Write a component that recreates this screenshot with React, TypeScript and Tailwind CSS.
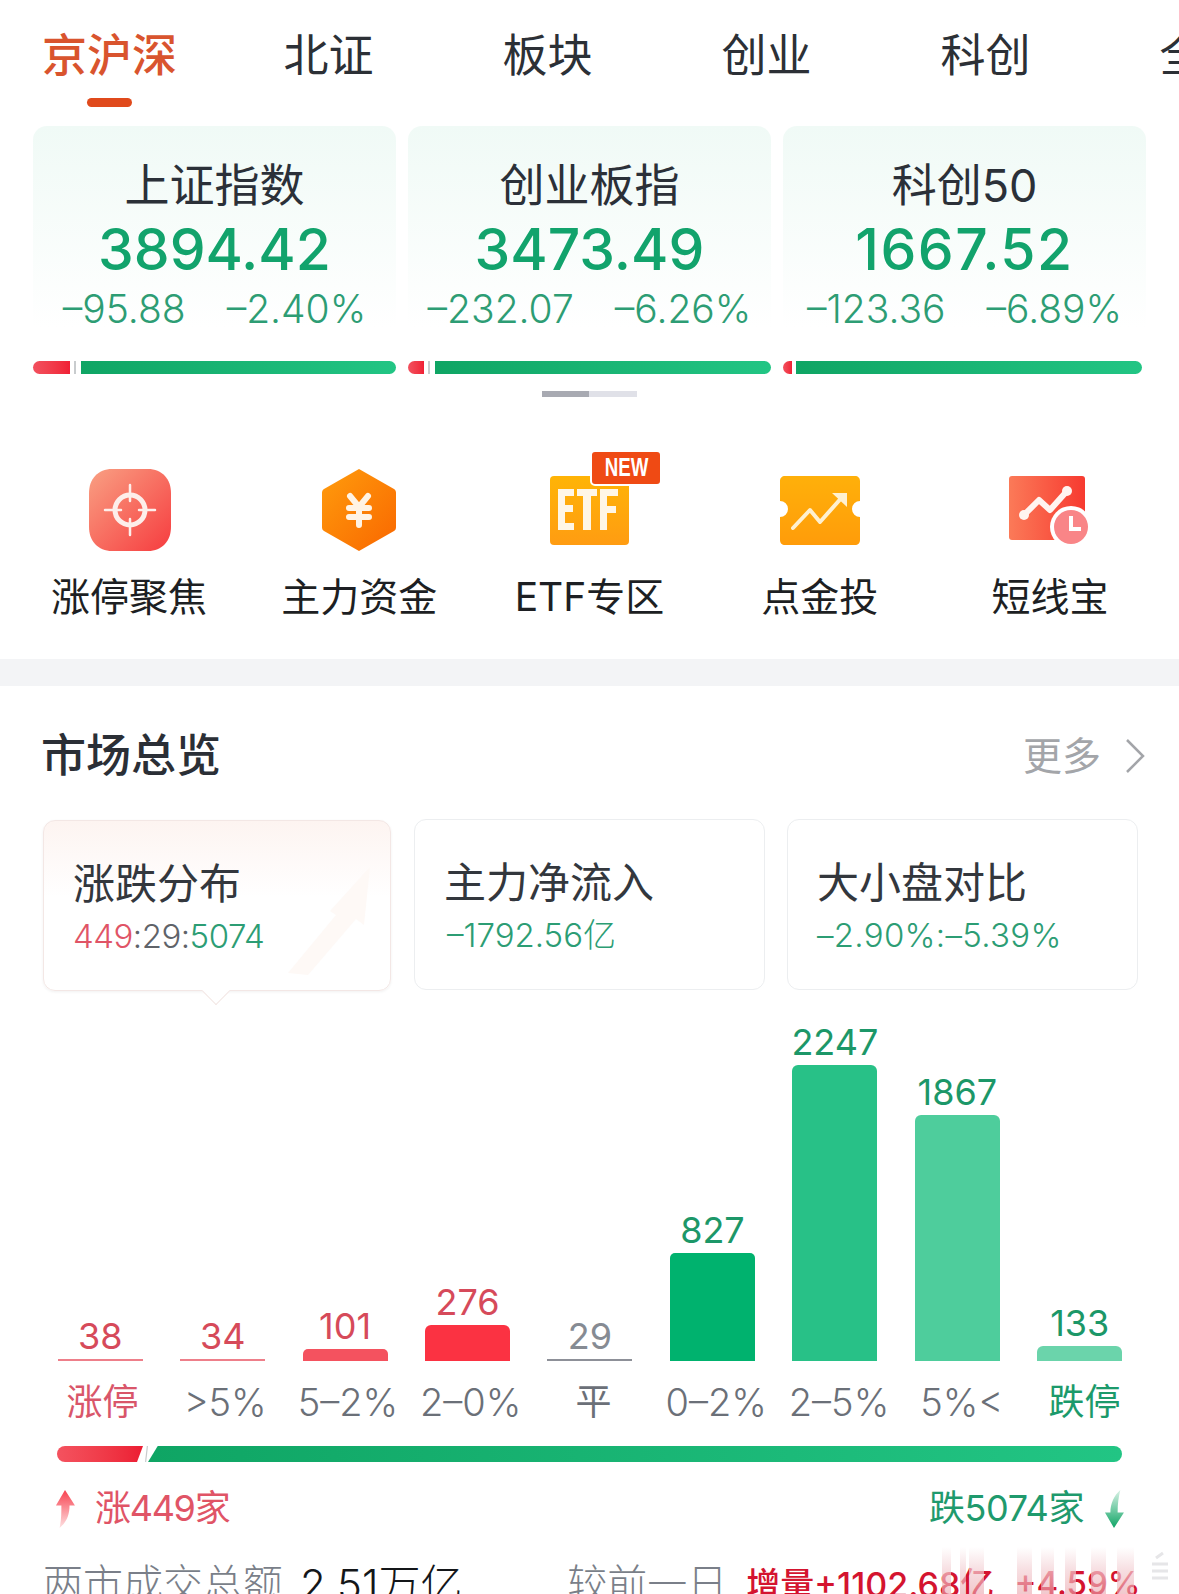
import React from "react";

const Tab = ({ t, active, w }: { t: string; active?: boolean; w: string }) => (
  <div className={`${w} flex flex-col items-center shrink-0`}>
    <div className={`text-[45px] leading-[56px] whitespace-nowrap ${active ? "text-[#d9542e] font-medium" : "text-[#2c3036]"}`}>{t}</div>
    <div className={`mt-[14px] w-[45px] h-[9px] rounded-full ${active ? "bg-[#e04a1c]" : "bg-transparent"}`} />
  </div>
);

const Index = ({ name, val, a, b, red, tick, green, vt }: { name: string; val: string; a: string; b: string; red: string; tick: string; green: string; vt?: string }) => (
  <div className="w-[363px] shrink-0">
    <div className="h-[224px] rounded-t-[14px] bg-gradient-to-b from-[#f0faf6] to-white to-[90%] flex flex-col items-center pt-[32px]">
      <div className="text-[45px] leading-[56px] text-[#2b3038]">{name}</div>
      <div className={`text-[57px] leading-[68px] font-medium text-[#12a36c] mt-[2px] ${vt ?? ""}`}>{val}</div>
      <div className="text-[39px] leading-[50px] text-[#2d9d74] flex gap-[41px] font-light">
        <span>{a}</span>
        <span>{b}</span>
      </div>
    </div>
    <div className="h-[13px] mt-[11px] flex items-stretch">
      <div className={`${red} rounded-l-full bg-gradient-to-r from-[#f2505e] to-[#f01f35]`} />
      <div className={tick} />
      <div className={`flex-1 rounded-r-full bg-gradient-to-r from-[#0fa564] to-[#22c584] ${green}`} />
    </div>
  </div>
);

const IconTarget = () => (
  <svg width="84" height="84" viewBox="0 0 84 84" className="translate-x-[1px]">
    <defs>
      <linearGradient id="g1" x1="0" y1="0" x2="1" y2="1">
        <stop offset="0" stopColor="#f9a083" />
        <stop offset="1" stopColor="#f63c3f" />
      </linearGradient>
    </defs>
    <path d="M24 1H60C74 1 83 11 83 25V59C83 73 74 83 60 83H24C10 83 1 73 1 59V25C1 11 10 1 24 1Z" fill="url(#g1)" />
    <circle cx="42" cy="42" r="15" fill="none" stroke="#fdeeea" strokeWidth="5" />
    <path d="M42 17V33M42 51V67M17 42H33M51 42H67" stroke="#fdeeea" strokeWidth="2.500" strokeLinecap="round" />
  </svg>
);

const IconHex = () => (
  <svg width="84" height="84" viewBox="0 0 84 84">
    <defs>
      <linearGradient id="g2" x1="0" y1="0" x2="1" y2="1">
        <stop offset="0" stopColor="#ff9c0c" />
        <stop offset="1" stopColor="#f96700" />
      </linearGradient>
    </defs>
    <path d="M42 1L77 21C78.500 22 79 23 79 25V59C79 61 78.500 62 77 63L42 83L7 63C5.500 62 5 61 5 59V25C5 23 5.500 22 7 21Z" fill="url(#g2)" />
    <path d="M33 28L42 39L51 28M32 40H52M32 49H52M42 40V57" fill="none" stroke="#fff3e4" strokeWidth="6" strokeLinecap="round" />
  </svg>
);

const IconEtf = () => (
  <div className="relative w-[84px] h-[84px]">
    <svg width="84" height="84" viewBox="0 0 84 84" className="absolute left-0 top-0">
      <defs>
        <linearGradient id="g3" x1="0" y1="0" x2="0" y2="1">
          <stop offset="0" stopColor="#ffb406" />
          <stop offset="1" stopColor="#ff9c12" />
        </linearGradient>
      </defs>
      <rect x="3" y="8" width="79" height="69" rx="4" fill="url(#g3)" />
      <path d="M11 21H27V28H18V37H26V44H18V55H27V62H11ZM30 21H50V28H44V62H36V28H30ZM53 21H71V28H60V38H69V45H60V62H53Z" fill="#fff6e6" />
    </svg>
    <div className="absolute left-[43px] -top-[18px] w-[68px] h-[32px] rounded-[5px] bg-[#ef4a14] border-2 border-white box-content text-white text-[22px] leading-[32px] font-bold text-center [font-family:'Liberation_Sans',sans-serif]">
      <span className="inline-block scale-x-[0.85] scale-y-[1.15]">NEW</span>
    </div>
  </div>
);

const IconTicket = () => (
  <svg width="84" height="84" viewBox="0 0 84 84">
    <defs>
      <linearGradient id="g4" x1="0" y1="0" x2="0" y2="1">
        <stop offset="0" stopColor="#ffb00a" />
        <stop offset="1" stopColor="#ff9c0a" />
      </linearGradient>
    </defs>
    <path d="M7 8H77C80 8 82 10 82 13V33A8 8 0 0 0 82 49V72C82 75 80 77 77 77H7C4 77 2 75 2 72V49A8 8 0 0 0 2 33V13C2 10 4 8 7 8Z" fill="url(#g4)" />
    <path d="M15 60L32 42L42 54L66 27" fill="none" stroke="#fff0cf" strokeWidth="4" strokeLinecap="round" strokeLinejoin="round" />
    <path d="M54 25H69V39Z" fill="#fff0cf" />
  </svg>
);

const IconShort = () => (
  <div className="relative w-[84px] h-[84px]">
    <svg width="100" height="84" viewBox="0 0 100 84" className="absolute -left-[2px] top-0">
      <defs>
        <linearGradient id="g5" x1="0" y1="0" x2="1" y2="0">
          <stop offset="0" stopColor="#fb7a58" />
          <stop offset="1" stopColor="#f73a30" />
        </linearGradient>
      </defs>
      <rect x="3" y="8" width="76" height="64" rx="3" fill="url(#g5)" />
      <path d="M18 47L33 32L44 42L61 23" fill="none" stroke="#fff4f0" strokeWidth="6" strokeLinecap="round" strokeLinejoin="round" />
      <circle cx="18" cy="47" r="5" fill="#fff4f0" />
      <circle cx="61" cy="23" r="5" fill="#fff4f0" />
      <circle cx="65" cy="59" r="21" fill="#ffffff" />
      <circle cx="65" cy="59" r="17" fill="#f98587" />
      <path d="M65 48V61H75" fill="none" stroke="#fff" strokeWidth="4" />
    </svg>
  </div>
);

const shortcuts: { icon: React.ReactNode; label: string }[] = [
  { icon: <IconTarget />, label: "涨停聚焦" },
  { icon: <IconHex />, label: "主力资金" },
  { icon: <IconEtf />, label: "ETF专区" },
  { icon: <IconTicket />, label: "点金投" },
  { icon: <IconShort />, label: "短线宝" },
];

const chart = [
  { n: "38", h: "h-[2px]", bar: "bg-[#ee7f8a]", nc: "text-[#d64a5a]", l: "涨停", lc: "text-[#d9566a] text-[36px] font-normal" },
  { n: "34", h: "h-[2px]", bar: "bg-[#ee7f8a]", nc: "text-[#d64a5a]", l: ">5%", lc: "text-[#6b7078] text-[38px] font-light" },
  { n: "101", h: "h-[12px] rounded-t-[5px]", bar: "bg-[#f4525f]", nc: "text-[#d64a5a]", l: "5–2%", lc: "text-[#6b7078] text-[38px] font-light" },
  { n: "276", h: "h-[36px] rounded-t-[6px]", bar: "bg-[#fb3242]", nc: "text-[#d64a5a]", l: "2–0%", lc: "text-[#6b7078] text-[38px] font-light" },
  { n: "29", h: "h-[2px]", bar: "bg-[#8d9098]", nc: "text-[#868b93]", l: "平", lc: "text-[#6b7078] text-[36px] font-normal" },
  { n: "827", h: "h-[108px] rounded-t-[5px]", bar: "bg-[#00b26e]", nc: "text-[#1c9768]", l: "0–2%", lc: "text-[#6b7078] text-[38px] font-light" },
  { n: "2247", h: "h-[296px] rounded-t-[6px]", bar: "bg-[#28c187]", nc: "text-[#1c9768]", l: "2–5%", lc: "text-[#6b7078] text-[38px] font-light" },
  { n: "1867", h: "h-[246px] rounded-t-[6px]", bar: "bg-[#4ecd9c]", nc: "text-[#1c9768]", l: "5%<", lc: "text-[#6b7078] text-[38px] font-light" },
  { n: "133", h: "h-[15px] rounded-t-[6px]", bar: "bg-[#6bd4ab]", nc: "text-[#1c9768]", l: "跌停", lc: "text-[#1c9a6b] text-[36px] font-normal" },
];

const Stat = ({ title, children, active, w }: { title: string; children: React.ReactNode; active?: boolean; w: string }) => (
  <div className={`${w} shrink-0 h-[171px] rounded-[12px] border pl-[29px] pt-[36px] relative ${active ? "translate-y-[1px] border-[#f3e7e5] bg-gradient-to-b from-[#fdf4f1] to-white to-[45%] shadow-[0_1px_3px_rgba(0,0,0,0.06)]" : "border-[#eceef0] bg-white"}`}>
    <div className="text-[42px] leading-[54px] text-[#33373d]">{title}</div>
    <div className="text-[33px] leading-[44px] font-light mt-[3px]">{children}</div>
    {active && (
      <>
        <svg width="90" height="110" viewBox="0 0 90 110" className="absolute right-[14px] top-[44px]">
          <path d="M2 108L50 50L44 46L84 2L78 60L70 54L22 110Z" fill="#fef9f6" />
        </svg>
        <div className="absolute left-[162px] -bottom-[11px] w-[20px] h-[20px] rotate-45 bg-white border-r border-b border-[#f3e7e5]" />
      </>
    )}
  </div>
);

const strips = [
  "left-[942px] w-[9px]", "left-[960px] w-[6px]", "left-[969px] w-[15px]", "left-[1017px] w-[15px]",
  "left-[1041px] w-[13px]", "left-[1065px] w-[11px]", "left-[1091px] w-[15px]", "left-[1117px] w-[17px]",
];

export default function App() {
  return (
    <div className="relative w-[1179px] h-[1594px] overflow-hidden bg-white [font-family:Inter,'Noto_Sans_CJK_SC',sans-serif]">
      {/* tabs */}
      <div className="flex pl-[20px] pt-[28px] h-[126px]">
        <Tab t="京沪深" active w="w-[179px]" />
        <Tab t="北证" w="w-[219px] ml-[20px]" />
        <Tab t="板块" w="w-[219px]" />
        <Tab t="创业" w="w-[219px]" />
        <Tab t="科创" w="w-[219px]" />
        <Tab t="全部" w="w-[219px]" />
      </div>
      {/* index cards */}
      <div className="flex gap-[12px] pl-[33px]">
        <Index name="上证指数" val="3894.42" a="–95.88" b="–2.40%" red="w-[37px]" tick="w-[2px] bg-[#c9ccce] ml-[4px] mr-[5px]" green="" />
        <Index name="创业板指" val="3473.49" a="–232.07" b="–6.26%" red="w-[16px]" tick="w-[2px] bg-[#c9ccce] ml-[4px] mr-[5px]" green="" />
        <Index name="科创50" val="1667.52" a="–123.36" b="–6.89%" red="w-[9px]" tick="w-[4px]" green="mr-[4px]" vt="tracking-[1.5px]" />
      </div>
      <div className="ml-[542px] mt-[17px] w-[95px] h-[6px] bg-[#e0e1e8]">
        <div className="w-[47px] h-full bg-[#a8aab2]" />
      </div>
      {/* shortcuts */}
      <div className="grid grid-cols-5 px-[14px] mt-[71px]">
        {shortcuts.map((s) => (
          <div key={s.label} className="flex flex-col items-center">
            <div className="h-[84px]">{s.icon}</div>
            <div className="text-[39px] leading-[50px] text-[#1d1f23] mt-[20px] whitespace-nowrap">{s.label}</div>
          </div>
        ))}
      </div>
      <div className="h-[27px] bg-[#f3f4f6] mt-[37px]" />
      {/* market overview */}
      <div className="flex items-center justify-between pl-[41px] pr-[34px] pt-[42px]">
        <div className="text-[45px] leading-[56px] font-medium text-[#2b2f36]">市场总览</div>
        <div className="flex items-center gap-[24px] text-[#a3a5a9]">
          <span className="text-[39px] leading-[56px]">更多</span>
          <svg width="20" height="36" viewBox="0 0 20 36" fill="none" stroke="#a3a5a9" strokeWidth="2.500">
            <path d="M2 2L18 18L2 34" />
          </svg>
        </div>
      </div>
      <div className="flex gap-[22px] pl-[43px] mt-[35px]">
        <Stat title="涨跌分布" active w="w-[348px]">
          <span className="tracking-[-0.5px] text-[#e05466]">449</span>
          <span className="tracking-[-0.5px] text-[#5f6369]">:29:</span>
          <span className="tracking-[-0.5px] text-[#2c9d74]">5074</span>
        </Stat>
        <Stat title="主力净流入" w="w-[351px] ml-[1px]">
          <span className="text-[#2c9d74] ml-[3px]">–1792.56亿</span>
        </Stat>
        <Stat title="大小盘对比" w="w-[351px]">
          <span className="text-[#2c9d74] tracking-[0.3px]">–2.90%:–5.39%</span>
        </Stat>
      </div>
      {/* chart */}
      <div className="grid grid-cols-9 w-[1102px] ml-[39px] h-[371px] items-end">
        {chart.map((c) => (
          <div key={c.l} className="flex flex-col items-center">
            <div className={`text-[36px] leading-[44px] mb-[1px] ${c.nc}`}>{c.n}</div>
            <div className={`w-[85px] ${c.h} ${c.bar}`} />
          </div>
        ))}
      </div>
      <div className="grid grid-cols-9 w-[1105px] ml-[41px] mt-[17px]">
        {chart.map((c) => (
          <div key={c.l} className={`text-center leading-[48px] whitespace-nowrap ${c.lc}`}>
            {c.l}
          </div>
        ))}
      </div>
      <div className="flex h-[16px] mt-[20px] ml-[57px] w-[1065px]">
        <div className="w-[86px] rounded-l-full bg-gradient-to-r from-[#f4525f] to-[#ec1c33] [clip-path:polygon(0_0,100%_0,93%_100%,0_100%)]" />
        <div className="w-[3px] ml-[2px] bg-[#c8cbcc] [clip-path:polygon(60%_0,100%_0,40%_100%,0_100%)]" />
        <div className="flex-1 rounded-r-full bg-gradient-to-r from-[#0fa564] to-[#22c584] [clip-path:polygon(1%_0,100%_0,100%_100%,0_100%)]" />
      </div>
      <div className="flex items-center justify-between ml-[53px] w-[1074px] mt-[21px] h-[50px]">
        <div className="flex items-center gap-[18px]">
          <svg width="24" height="38" viewBox="0 0 24 42" className="mt-[2px]">
            <defs>
              <linearGradient id="up" x1="0" y1="0" x2="0" y2="1">
                <stop offset="0" stopColor="#f8414f" />
                <stop offset="1" stopColor="#fde2e3" />
              </linearGradient>
            </defs>
            <path d="M12 0L23 17H17C17 27 14 35 6 42C8 33 8 25 8 17H2Z" fill="url(#up)" />
          </svg>
          <span className="text-[36px] leading-[50px] text-[#e05466] tracking-[-1.300px]">涨449家</span>
        </div>
        <div className="flex items-center gap-[17px]">
          <span className="text-[36px] leading-[50px] text-[#1f9a6d] tracking-[-0.4px]">跌5074家</span>
          <svg width="26" height="38" viewBox="0 0 24 42" className="mt-[2px]">
            <defs>
              <linearGradient id="dn" x1="0" y1="1" x2="0" y2="0">
                <stop offset="0" stopColor="#10a566" />
                <stop offset="1" stopColor="#d9f2e6" />
              </linearGradient>
            </defs>
            <path d="M12 42L23 25H16C16 15 17 8 19 0C12 6 8 15 8 25H2Z" fill="url(#dn)" />
          </svg>
        </div>
      </div>
      {/* totals */}
      <div className="flex items-center pl-[43px] mt-[25px] h-[52px] whitespace-nowrap">
        <span className="text-[40px] text-[#7a7f89] font-light">两市成交总额</span>
        <span className="text-[42px] text-[#141619] font-light ml-[17px]">2.51万亿,</span>
        <span className="text-[40px] text-[#7a7f89] font-light ml-[93px]">较前一日</span>
        <span className="text-[34px] text-[#d4142f] font-medium ml-[19px]">增量+1102.68亿</span>
        <span className="text-[33px] text-[#d4142f] font-medium ml-[20px]">+4.59%</span>
      </div>
      {/* watermark */}
      {strips.map((s) => (
        <div key={s} className={`absolute top-[1547px] h-[47px] ${s} bg-gradient-to-b from-[#f5d5d8]/0 via-[#f3d0d4]/70 to-[#e9a4ac]/60`} />
      ))}
      <svg width="20" height="30" viewBox="0 0 20 30" className="absolute left-[1150px] top-[1551px]" fill="none" stroke="#e6e6e8" strokeWidth="3">
        <path d="M2 27H18M2 20H18M2 13H18M6 7L13 2" />
      </svg>
    </div>
  );
}
